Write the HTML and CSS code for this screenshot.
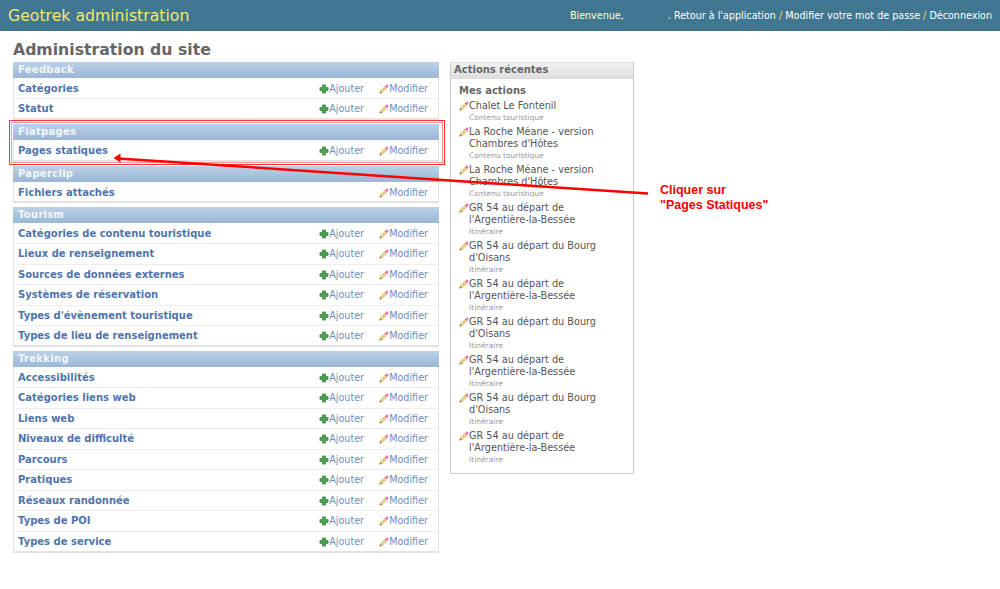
FILE: index.html
```html
<!DOCTYPE html>
<html lang="fr">
<head>
  <meta charset="UTF-8" />
  <title>Administration du site</title>
  <link rel="stylesheet" href="styles.css">
</head>
<body>
  <svg class="defs" width="0" height="0">
    <symbol id="i-add" viewBox="0 0 10 10">
      <path d="M3.600 1h2.800v2.600H9v2.800H6.400V9H3.600V6.400H1V3.600h2.600z" fill="#4f9e55" stroke="#45934b" stroke-width="1" stroke-linejoin="round"/>
    </symbol>
    <symbol id="i-edit" viewBox="0 0 12 12">
      <path d="M.8 11.200l.8-3.200L7 2.600 9.400 5 4 10.400z" fill="#ecd08a" stroke="#cfb06a" stroke-width=".6"/>
      <path d="M7 2.600l1.800-1.800a1 1 0 0 1 1.400 0l1 1a1 1 0 0 1 0 1.400L9.400 5z" fill="#f070c8"/>
      <path d="M.8 11.200l.6-2.400 1.800 1.800z" fill="#7a6a50"/>
    </symbol>
  </svg>

  <header class="topbar">
    <div class="brand">Geotrek administration</div>
    <div class="usertools">
      <span class="welcome">Bienvenue,</span>
      <span class="username"></span>
      <span>. Retour à l'application <i>/</i> Modifier votre mot de passe <i>/</i> Déconnexion</span>
    </div>
  </header>

  <main class="content">
    <h1>Administration du site</h1>
    <div class="columns">
      <div class="apps">
        <table class="module"><caption>Feedback</caption>
          <tr><th>Catégories</th><td class="add"><svg><use href="#i-add"/></svg>Ajouter</td><td class="edit"><svg><use href="#i-edit"/></svg>Modifier</td></tr>
          <tr><th>Statut</th><td class="add"><svg><use href="#i-add"/></svg>Ajouter</td><td class="edit"><svg><use href="#i-edit"/></svg>Modifier</td></tr>
        </table>
        <table class="module"><caption>Flatpages</caption>
          <tr><th>Pages statiques</th><td class="add"><svg><use href="#i-add"/></svg>Ajouter</td><td class="edit"><svg><use href="#i-edit"/></svg>Modifier</td></tr>
        </table>
        <table class="module"><caption>Paperclip</caption>
          <tr><th>Fichiers attachés</th><td class="add"></td><td class="edit"><svg><use href="#i-edit"/></svg>Modifier</td></tr>
        </table>
        <table class="module"><caption>Tourism</caption>
          <tr><th>Catégories de contenu touristique</th><td class="add"><svg><use href="#i-add"/></svg>Ajouter</td><td class="edit"><svg><use href="#i-edit"/></svg>Modifier</td></tr>
          <tr><th>Lieux de renseignement</th><td class="add"><svg><use href="#i-add"/></svg>Ajouter</td><td class="edit"><svg><use href="#i-edit"/></svg>Modifier</td></tr>
          <tr><th>Sources de données externes</th><td class="add"><svg><use href="#i-add"/></svg>Ajouter</td><td class="edit"><svg><use href="#i-edit"/></svg>Modifier</td></tr>
          <tr><th>Systèmes de réservation</th><td class="add"><svg><use href="#i-add"/></svg>Ajouter</td><td class="edit"><svg><use href="#i-edit"/></svg>Modifier</td></tr>
          <tr><th>Types d'évènement touristique</th><td class="add"><svg><use href="#i-add"/></svg>Ajouter</td><td class="edit"><svg><use href="#i-edit"/></svg>Modifier</td></tr>
          <tr><th>Types de lieu de renseignement</th><td class="add"><svg><use href="#i-add"/></svg>Ajouter</td><td class="edit"><svg><use href="#i-edit"/></svg>Modifier</td></tr>
        </table>
        <table class="module"><caption>Trekking</caption>
          <tr><th>Accessibilités</th><td class="add"><svg><use href="#i-add"/></svg>Ajouter</td><td class="edit"><svg><use href="#i-edit"/></svg>Modifier</td></tr>
          <tr><th>Catégories liens web</th><td class="add"><svg><use href="#i-add"/></svg>Ajouter</td><td class="edit"><svg><use href="#i-edit"/></svg>Modifier</td></tr>
          <tr><th>Liens web</th><td class="add"><svg><use href="#i-add"/></svg>Ajouter</td><td class="edit"><svg><use href="#i-edit"/></svg>Modifier</td></tr>
          <tr><th>Niveaux de difficulté</th><td class="add"><svg><use href="#i-add"/></svg>Ajouter</td><td class="edit"><svg><use href="#i-edit"/></svg>Modifier</td></tr>
          <tr><th>Parcours</th><td class="add"><svg><use href="#i-add"/></svg>Ajouter</td><td class="edit"><svg><use href="#i-edit"/></svg>Modifier</td></tr>
          <tr><th>Pratiques</th><td class="add"><svg><use href="#i-add"/></svg>Ajouter</td><td class="edit"><svg><use href="#i-edit"/></svg>Modifier</td></tr>
          <tr><th>Réseaux randonnée</th><td class="add"><svg><use href="#i-add"/></svg>Ajouter</td><td class="edit"><svg><use href="#i-edit"/></svg>Modifier</td></tr>
          <tr><th>Types de POI</th><td class="add"><svg><use href="#i-add"/></svg>Ajouter</td><td class="edit"><svg><use href="#i-edit"/></svg>Modifier</td></tr>
          <tr><th>Types de service</th><td class="add"><svg><use href="#i-add"/></svg>Ajouter</td><td class="edit"><svg><use href="#i-edit"/></svg>Modifier</td></tr>
        </table>
      </div>

      <aside class="recent">
        <h2>Actions récentes</h2>
        <h3>Mes actions</h3>
        <ul>
          <li><svg><use href="#i-edit"/></svg><span>Chalet Le Fontenil</span><small>Contenu touristique</small></li>
          <li><svg><use href="#i-edit"/></svg><span>La Roche Méane - version Chambres d'Hôtes</span><small>Contenu touristique</small></li>
          <li><svg><use href="#i-edit"/></svg><span>La Roche Méane - version Chambres d'Hôtes</span><small>Contenu touristique</small></li>
          <li><svg><use href="#i-edit"/></svg><span>GR 54 au départ de l'Argentière-la-Bessée</span><small>Itinéraire</small></li>
          <li><svg><use href="#i-edit"/></svg><span>GR 54 au départ du Bourg d'Oisans</span><small>Itinéraire</small></li>
          <li><svg><use href="#i-edit"/></svg><span>GR 54 au départ de l'Argentière-la-Bessée</span><small>Itinéraire</small></li>
          <li><svg><use href="#i-edit"/></svg><span>GR 54 au départ du Bourg d'Oisans</span><small>Itinéraire</small></li>
          <li><svg><use href="#i-edit"/></svg><span>GR 54 au départ de l'Argentière-la-Bessée</span><small>Itinéraire</small></li>
          <li><svg><use href="#i-edit"/></svg><span>GR 54 au départ du Bourg d'Oisans</span><small>Itinéraire</small></li>
          <li><svg><use href="#i-edit"/></svg><span>GR 54 au départ de l'Argentière-la-Bessée</span><small>Itinéraire</small></li>
        </ul>
      </aside>
    </div>
  </main>

  <!-- annotation drawn on top of the screenshot -->
  <div class="highlight"></div>
  <svg class="arrow" width="1000" height="589">
    <line x1="648" y1="193.500" x2="118" y2="158.500" stroke="#f00" stroke-width="2.500"/>
    <path d="M113.500 158l7-4.500v9z" fill="#f00"/>
  </svg>
  <p class="note">Cliquer sur<br>"Pages Statiques"</p>
</body>
</html>
```

FILE: styles.css
```css
* {
  box-sizing: border-box;
}
html, body {
  height: 589px;
  overflow: hidden;
}
body {
  margin: 0;
  position: relative;
  font-family: "DejaVu Sans", Verdana, sans-serif;
  font-size: 11px;
  color: #333;
  background-color: #fff;
}
.defs {
  position: absolute;
}
.topbar {
  height: 31px;
  padding: 0 8px;
  display: flex;
  justify-content: space-between;
  align-items: center;
  background-color: #417690;
  border-bottom: 1px solid #3a6a85;
}
.brand {
  font-size: 15.700px;
  color: #f5e96a;
}
.usertools {
  display: flex;
  font-size: 9.600px;
  color: #fff;
}
.usertools i {
  font-style: normal;
  color: #f5dd5d;
}
.welcome {
  color: #ffc;
}
.username {
  width: 44px;
}
.content {
  padding: 10px 13px 0;
}
h1 {
  margin: 0 0 3px;
  height: 18px;
  font-size: 15.700px;
  line-height: 18px;
  color: #666;
}
.columns {
  display: flex;
  gap: 11px;
  align-items: flex-start;
}
.apps {
  width: 426px;
}
.module {
  width: 100%;
  margin-bottom: 4px;
  border-collapse: collapse;
  background-color: #fff;
  border: 1px solid #e3e3e3;
  border-bottom-width: 2px;
  border-top: none;
}
.module caption {
  height: 16px;
  padding: 0 5px;
  text-align: left;
  font-size: 10px;
  font-weight: bold;
  line-height: 15px;
  letter-spacing: .3px;
  color: #f2f6fa;
  background: linear-gradient(#bcd1e7, #9ab7d6);
}
.module tr {
  height: 20.500px;
  border-bottom: 1px solid #eee;
}
.module tr:last-child {
  border-bottom: none;
}
.module th {
  padding: 0 4px;
  text-align: left;
  font-size: 10px;
  font-weight: bold;
  color: #4f74ab;
}
.module td {
  padding: 0;
  font-size: 9.600px;
  color: #6d8fbc;
  white-space: nowrap;
}
.module tr:only-child th,
.module tr:only-child td {
  padding-top: 2px;
}
.module .add {
  width: 60px;
}
.module .edit {
  width: 58px;
  padding-right: 10px;
}
.module svg {
  width: 10px;
  height: 10px;
  vertical-align: -2px;
}
.recent {
  width: 184px;
  height: 412px;
  border: 1px solid #ccc;
  border-top-color: #ddd;
}
.recent h2 {
  margin: 0;
  height: 16px;
  padding: 0 3px;
  font-size: 10px;
  line-height: 13px;
  color: #666;
  background: linear-gradient(#f2f2f2, #dcdcdc);
}
.recent h3 {
  margin: 5px 0 2px 8px;
  height: 14px;
  font-size: 10px;
  line-height: 14px;
  color: #666;
}
.recent ul {
  margin: 0;
  padding: 0 8px;
  list-style: none;
}
.recent li {
  position: relative;
  padding-left: 10px;
  margin-bottom: 2px;
}
.recent li svg {
  position: absolute;
  left: 0;
  top: 1px;
  width: 10px;
  height: 10px;
}
.recent li span {
  display: block;
  font-size: 9.700px;
  line-height: 12px;
  color: #555;
}
.recent small {
  display: block;
  height: 12px;
  font-size: 7.500px;
  line-height: 12px;
  color: #999;
}
.highlight {
  position: absolute;
  left: 9px;
  top: 120px;
  width: 436px;
  height: 45px;
  border: 1px solid #f33;
  outline: 1px solid #f99;
  outline-offset: -3px;
}
.arrow {
  position: absolute;
  left: 0;
  top: 0;
}
.note {
  position: absolute;
  left: 660px;
  top: 183px;
  margin: 0;
  font-family: "Liberation Sans", Arial, sans-serif;
  font-size: 12.500px;
  font-weight: bold;
  line-height: 15px;
  color: #f00;
}
```
